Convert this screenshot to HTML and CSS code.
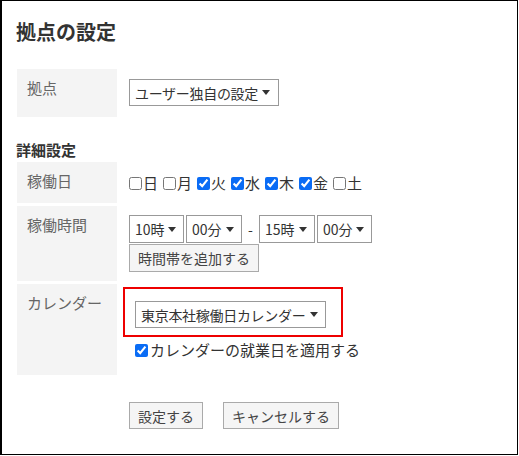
FILE: index.html
```html
<!DOCTYPE html>
<html lang="ja">
<head>
<meta charset="utf-8">
<title>拠点の設定</title>
<link rel="stylesheet" href="styles.css">
</head>
<body>
<div class="frame">
  <h1 class="title">拠点の設定</h1>

  <div class="row row-base">
    <div class="label">拠点</div>
    <div class="cell cell-base">
      <span class="select bsel"><span class="stext">ユーザー独自の設定</span><i class="caret"></i></span>
    </div>
  </div>

  <h2 class="section">詳細設定</h2>

  <div class="rows">
    <div class="row row-days">
      <div class="label">稼働日</div>
      <div class="cell cell-days">
        <label class="day"><input type="checkbox">日</label>
        <label class="day"><input type="checkbox">月</label>
        <label class="day"><input type="checkbox" checked>火</label>
        <label class="day"><input type="checkbox" checked>水</label>
        <label class="day"><input type="checkbox" checked>木</label>
        <label class="day"><input type="checkbox" checked>金</label>
        <label class="day"><input type="checkbox">土</label>
      </div>
    </div>

    <div class="row row-time">
      <div class="label">稼働時間</div>
      <div class="cell cell-time">
        <div class="time-line">
          <span class="select tsel tsel-h"><span>10時</span><i class="caret"></i></span>
          <span class="select tsel tsel-m"><span>00分</span><i class="caret"></i></span>
          <span class="dash">-</span>
          <span class="select tsel tsel-m"><span>15時</span><i class="caret"></i></span>
          <span class="select tsel tsel-h"><span>00分</span><i class="caret"></i></span>
        </div>
        <button class="btn" type="button">時間帯を追加する</button>
      </div>
    </div>

    <div class="row row-cal">
      <div class="label">カレンダー</div>
      <div class="cell cell-cal">
        <div class="highlight">
          <span class="select csel"><span class="stext">東京本社稼働日カレンダー</span><i class="caret"></i></span>
        </div>
        <label class="apply"><input type="checkbox" checked>カレンダーの就業日を適用する</label>
      </div>
    </div>
  </div>

  <div class="actions">
    <button class="btn" type="button">設定する</button>
    <button class="btn" type="button">キャンセルする</button>
  </div>
</div>
</body>
</html>
```

FILE: styles.css
```css
html, body {
  margin: 0;
  padding: 0;
  background: #fff;
}

body {
  font-family: "Noto Sans CJK JP", "Noto Sans", sans-serif;
  color: #333;
}

.frame {
  box-sizing: border-box;
  width: 518px;
  height: 455px;
  border-style: solid;
  border-color: #000;
  border-width: 1px 1px 1px 2px;
  padding: 0 0 0 15px;
}

.title {
  margin: 18px 0 0 -1px;
  font-size: 20px;
  line-height: 26px;
  font-weight: bold;
  color: #333;
}

.row {
  display: grid;
  grid-template-columns: 100px 1fr;
  column-gap: 12px;
}

.row-base {
  margin-top: 24px;
}

.label {
  background: #f4f4f4;
  color: #666;
  font-size: 15px;
  line-height: 20px;
  padding: 9px 10px 0;
}

.cell {
  font-size: 14px;
  line-height: 20px;
}

.cell-base {
  padding: 10px 0 11px;
}

.section {
  margin: 22px 0 2px -1px;
  font-size: 15px;
  line-height: 21px;
  font-weight: bold;
  color: #333;
}

.rows {
  display: flex;
  flex-direction: column;
  gap: 3px;
}

.select {
  display: inline-flex;
  align-items: center;
  justify-content: space-between;
  box-sizing: border-box;
  height: 27px;
  border: 1px solid #999;
  background: #fff;
  padding: 0 8px 0 5px;
  font-size: 14px;
  color: #333;
  white-space: nowrap;
  vertical-align: top;
}

.stext {
  letter-spacing: -0.3px;
}

.bsel {
  width: 150px;
}

.caret {
  display: inline-block;
  width: 0;
  height: 0;
  border-left: 4px solid transparent;
  border-right: 4px solid transparent;
  border-top: 5px solid #333;
}

.cell-days {
  display: flex;
  align-items: center;
  gap: 5px;
  padding: 11px 0 10px;
  font-size: 15px;
}

.day {
  display: inline-flex;
  align-items: center;
  font-size: 15px;
  line-height: 20px;
  color: #333;
}

input[type="checkbox"] {
  width: 13px;
  height: 13px;
  margin: 0 1px 0 0;
  accent-color: #0a6cf5;
}

.cell-time {
  padding: 9px 0 9px;
  display: flex;
  flex-direction: column;
  align-items: flex-start;
  gap: 1px;
}

.time-line {
  display: flex;
  align-items: center;
  gap: 2px;
}

.tsel {
  height: 28px;
  padding: 0 7px 0 5px;
}

.tsel-h {
  width: 55px;
}

.tsel-m {
  width: 56px;
}

.dash {
  width: 13px;
  text-align: center;
  font-size: 14px;
}

.btn {
  box-sizing: border-box;
  height: 28px;
  padding: 0 8px;
  border: 1px solid #aaa;
  border-radius: 0;
  background: #f5f5f5;
  color: #444;
  font-family: "Noto Sans CJK JP", "Noto Sans", sans-serif;
  font-size: 14px;
  line-height: 20px;
  cursor: pointer;
}

.cell-cal {
  padding: 3px 0 15px;
}

.highlight {
  box-sizing: border-box;
  width: 220px;
  height: 50px;
  margin-left: -6px;
  border: 2px solid #e00;
  padding: 12px 0 0 10px;
}

.csel {
  width: 191px;
  padding-right: 7px;
}

.apply {
  display: flex;
  align-items: center;
  margin: 3px 0 0 6px;
  font-size: 15px;
  line-height: 20px;
  color: #333;
}

.apply input {
  margin-right: 2px;
}

.actions {
  display: flex;
  gap: 20px;
  margin: 27px 0 0 112px;
}

.actions .btn {
  height: 27px;
}
```
